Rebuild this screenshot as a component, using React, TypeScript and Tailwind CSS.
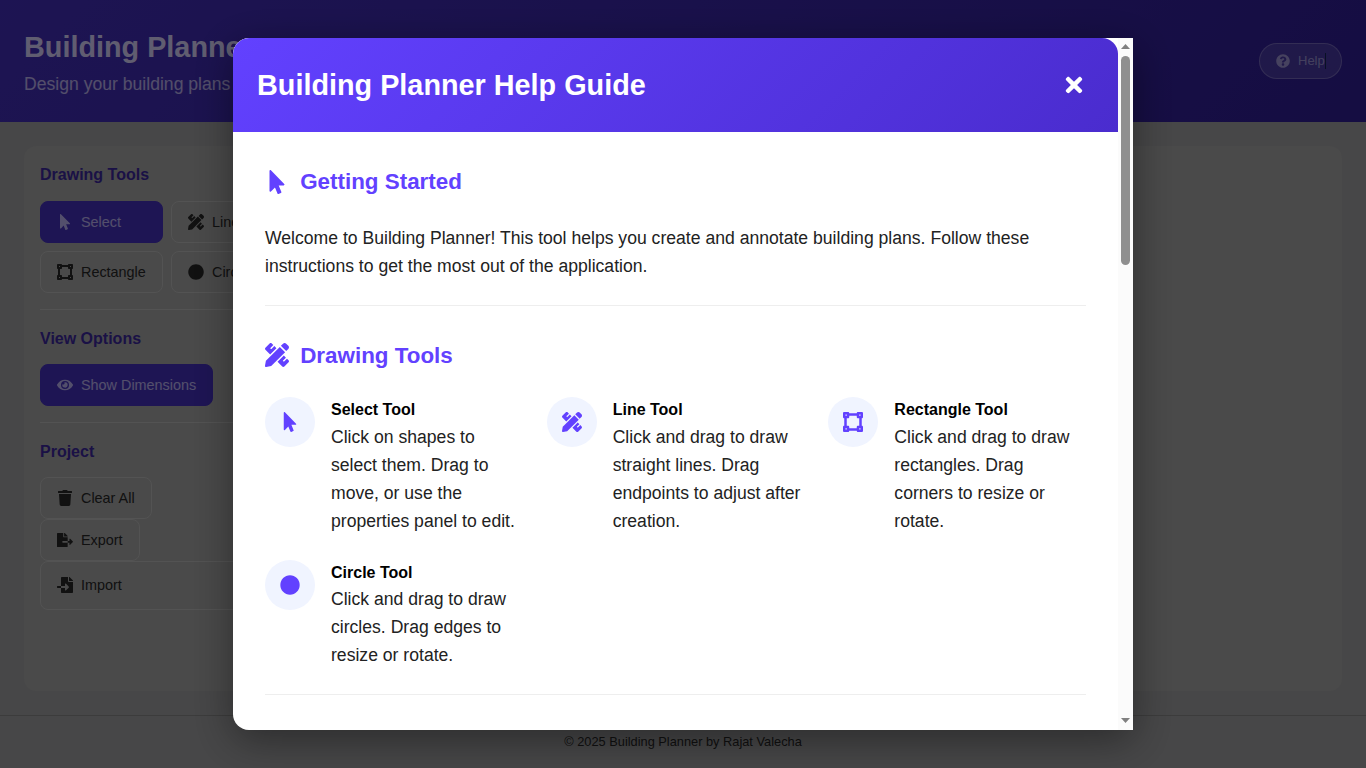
import React from "react";
import { FaMousePointer, FaPencilRuler, FaVectorSquare, FaCircle, FaEye, FaTrash, FaFileExport, FaFileImport, FaQuestionCircle, FaTimes } from "react-icons/fa";

type IconT = React.ComponentType<{ className?: string }>;

function ToolBtn({ icon: Icon, label, active, className }: { icon: IconT; label: string; active?: boolean; className?: string }) {
  return (
    <button className={`flex items-center gap-2 rounded-lg border px-4 py-3 text-[14.4px] leading-4 ${active ? "border-[#3c2aa8] bg-[#3c2aa8] text-white/55" : "border-[#a6a6a6] text-[#222]"} ${className ?? ""}`}>
      <Icon className="h-4 w-4 shrink-0" />
      <span>{label}</span>
    </button>
  );
}

function SideTitle({ children, className }: { children: React.ReactNode; className?: string }) {
  return <h3 className={`text-base leading-[25.6px] font-bold text-[#34238c] ${className ?? "mb-[13px]"}`}>{children}</h3>;
}

function Tool({ icon: Icon, title, text }: { icon: IconT; title: string; text: string }) {
  return (
    <div className="flex gap-4">
      <div className="flex h-[50px] w-[50px] shrink-0 items-center justify-center rounded-full bg-[#f0f4ff]">
        <Icon className="h-5 w-5 text-[#6241ff]" />
      </div>
      <div>
        <div className="text-base leading-[25.6px] font-bold text-black">{title}</div>
        <p className="text-[17.6px] leading-[28.16px] text-[#222]">{text}</p>
      </div>
    </div>
  );
}

function Heading({ icon: Icon, children }: { icon: IconT; children: React.ReactNode }) {
  return (
    <h2 className="mb-6 flex items-center gap-[11.2px] text-[22.4px] leading-[35.84px] font-bold text-[#6241ff]">
      <Icon className="h-6 w-6" />
      {children}
    </h2>
  );
}

export default function App() {
  return (
    <div className="relative flex h-screen flex-col overflow-hidden bg-[#8e8e90] font-['Liberation_Sans',Arial,sans-serif]">
      <header className="flex h-[122px] shrink-0 items-center justify-between bg-[linear-gradient(135deg,#3b29a6,#2a1a84)] px-6">
        <div>
          <h1 className="text-[28.8px] leading-[46px] font-bold text-white/70">Building Planner</h1>
          <p className="text-[17.6px] leading-[28px] text-white/55">Design your building plans with ease</p>
        </div>
        <button className="flex h-9 w-[83px] items-center gap-2 rounded-full border border-white/20 bg-white/10 pl-4 text-[13px] text-white/40">
          <FaQuestionCircle className="h-[14px] w-[14px]" />
          <span className="border-r border-[#10204a] leading-4">Help</span>
        </button>
      </header>

      <main className="flex min-h-0 flex-1 p-6">
        <div className="flex-1 rounded-xl bg-[#949494]">
          <aside className="w-[286px] p-4">
            <SideTitle>Drawing Tools</SideTitle>
            <div className="grid grid-cols-2 gap-2">
              <ToolBtn icon={FaMousePointer} label="Select" active />
              <ToolBtn icon={FaPencilRuler} label="Line" />
              <ToolBtn icon={FaVectorSquare} label="Rectangle" />
              <ToolBtn icon={FaCircle} label="Circle" />
            </div>
            <div className="my-4 h-px bg-[#a6a6a6]" />
            <SideTitle>View Options</SideTitle>
            <ToolBtn icon={FaEye} label="Show Dimensions" active className="w-fit" />
            <div className="my-4 h-px bg-[#a6a6a6]" />
            <SideTitle className="mb-3">Project</SideTitle>
            <div className="flex flex-col items-start">
              <ToolBtn icon={FaTrash} label="Clear All" />
              <ToolBtn icon={FaFileExport} label="Export" />
              <ToolBtn icon={FaFileImport} label="Import" className="h-[49px] w-full" />
            </div>
          </aside>
        </div>
      </main>

      <footer className="h-[53px] shrink-0 border-t border-[#787878] pt-[18px] text-center text-[12.8px] leading-4 text-[#222]">
        © 2025 Building Planner by Rajat Valecha
      </footer>

      <div className="fixed inset-0 flex items-center justify-center bg-black/50">
        <div className="flex h-[90vh] w-[900px] rounded-l-2xl shadow-[0_10px_40px_rgba(0,0,0,0.4)]">
          <div className="min-w-0 flex-1 overflow-hidden rounded-l-2xl bg-white">
            <div className="flex h-[94px] items-center justify-between rounded-t-2xl bg-[linear-gradient(135deg,#6241ff,#4a2cce)] pr-8 pl-6">
              <h2 className="text-[28.8px] leading-[46px] font-bold text-white">Building Planner Help Guide</h2>
              <button className="text-white"><FaTimes className="h-6 w-6" /></button>
            </div>
            <div className="px-8 pt-8">
              <section className="mb-8 border-b border-[#eeeeee] pb-6">
                <Heading icon={FaMousePointer}>Getting Started</Heading>
                <p className="text-[17.6px] leading-[28.16px] text-[#222]">
                  Welcome to Building Planner! This tool helps you create and annotate building plans. Follow these instructions to get the most out of the application.
                </p>
              </section>
              <section className="border-b border-[#eeeeee] pb-6">
                <Heading icon={FaPencilRuler}>Drawing Tools</Heading>
                <div className="grid grid-cols-3 gap-x-6 gap-y-[23.9px]">
                  <Tool icon={FaMousePointer} title="Select Tool" text="Click on shapes to select them. Drag to move, or use the properties panel to edit." />
                  <Tool icon={FaPencilRuler} title="Line Tool" text="Click and drag to draw straight lines. Drag endpoints to adjust after creation." />
                  <Tool icon={FaVectorSquare} title="Rectangle Tool" text="Click and drag to draw rectangles. Drag corners to resize or rotate." />
                  <Tool icon={FaCircle} title="Circle Tool" text="Click and drag to draw circles. Drag edges to resize or rotate." />
                </div>
              </section>
            </div>
          </div>
          <div className="flex w-[15px] shrink-0 flex-col items-center bg-[#fbfbfb]">
            <svg width="9" height="5" viewBox="0 0 9 5" className="mt-[6px] shrink-0" fill="#808080"><path d="M4.5 0L9 5H0z" /></svg>
            <div className="mt-[7px] h-[209px] w-[9px] rounded-full bg-[#8f8f8f]" />
            <svg width="9" height="5" viewBox="0 0 9 5" className="mt-auto mb-[7px] shrink-0" fill="#808080"><path d="M0 0H9L4.5 5z" /></svg>
          </div>
        </div>
      </div>
    </div>
  );
}
